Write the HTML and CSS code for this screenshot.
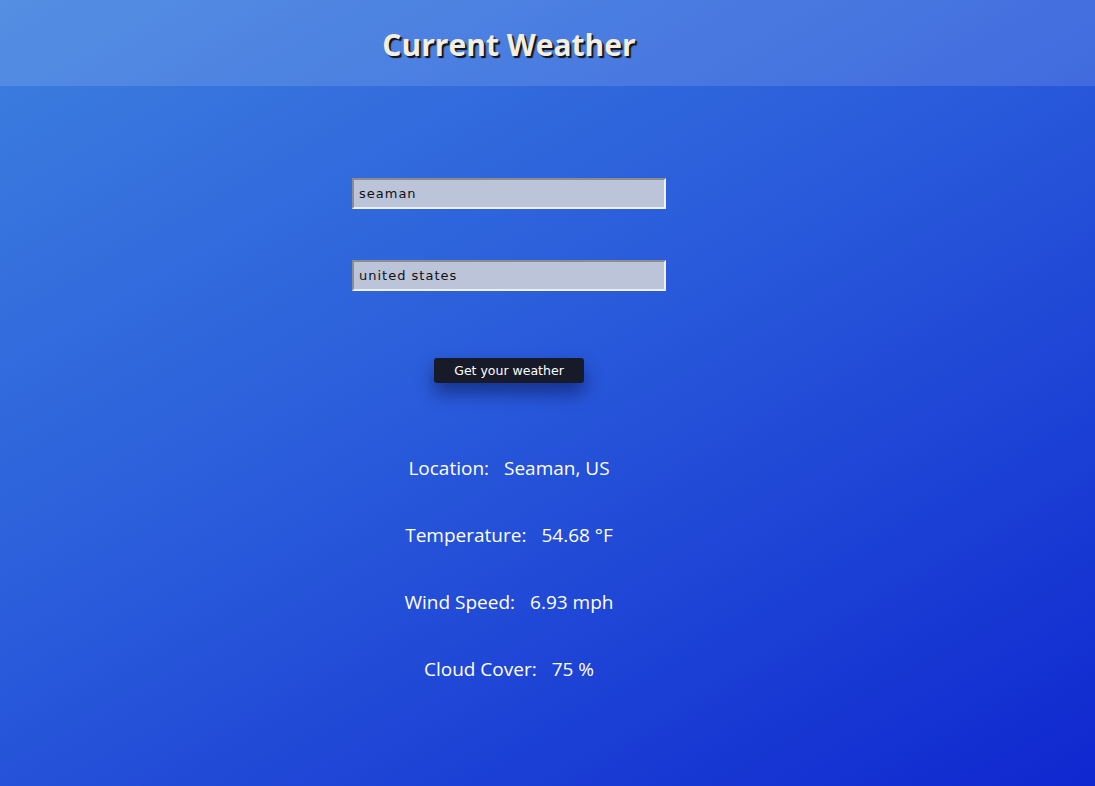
FILE: index.html
```html
<!DOCTYPE html>
<html lang="en">
<head>
<meta charset="utf-8">
<title>Current Weather</title>
<link rel="stylesheet" href="styles.css">
</head>
<body>
  <header class="topbar">
    <div class="wrap">
      <h1 class="title">Current Weather</h1>
    </div>
  </header>
  <main class="wrap content">
    <form class="form">
      <input class="field" type="text" value="seaman">
      <input class="field" type="text" value="united states">
      <button class="btn" type="button">Get your weather</button>
    </form>
    <section class="results">
      <p class="row"><span>Location:</span><span>Seaman, US</span></p>
      <p class="row"><span>Temperature:</span><span>54.68 °F</span></p>
      <p class="row"><span>Wind Speed:</span><span>6.93 mph</span></p>
      <p class="row"><span>Cloud Cover:</span><span>75 %</span></p>
    </section>
  </main>
</body>
</html>
```
FILE: styles.css
```css
html, body {
  margin: 0;
  padding: 0;
  height: 100%;
}
body {
  background: linear-gradient(150deg, #3d80df 0%, #2a5cdb 45%, #0f27cf 100%);
  font-family: "Open Sans", "Noto Sans", sans-serif;
  color: #fff;
  min-height: 786px;
}
.wrap {
  width: 1018px;
  display: flex;
  flex-direction: column;
  align-items: center;
}
.topbar {
  height: 86px;
  background: rgba(255, 255, 255, 0.12);
}
.title {
  margin: 0;
  padding-top: 25px;
  font-size: 30px;
  font-weight: 700;
  line-height: 40px;
  color: #f3eee4;
  text-shadow: 2px 2px 1px #111;
}
.form {
  display: flex;
  flex-direction: column;
  align-items: center;
  padding-top: 92px;
}
.field {
  box-sizing: border-box;
  width: 314px;
  height: 31px;
  margin: 0 0 51px;
  padding: 0 5px;
  background: #bcc4da;
  border: 2px solid #f0f0f0;
  border-top-color: #8c8c8c;
  border-left-color: #8c8c8c;
  font-family: "DejaVu Sans", sans-serif;
  font-size: 13px;
  letter-spacing: 1px;
  color: #111;
}
.field + .field {
  margin-bottom: 67px;
}
.btn {
  width: 150px;
  height: 25px;
  padding: 0;
  border: none;
  border-radius: 3px;
  background: #161a29;
  color: #fff;
  font-family: "DejaVu Sans", sans-serif;
  font-size: 12.5px;
  box-shadow: 0 10px 18px rgba(0, 0, 40, 0.45);
}
.results {
  display: flex;
  flex-direction: column;
  align-items: center;
  padding-top: 72px;
  gap: 40px;
}
.row {
  margin: 0;
  font-size: 19px;
  line-height: 27px;
  display: flex;
  gap: 15px;
}
```
